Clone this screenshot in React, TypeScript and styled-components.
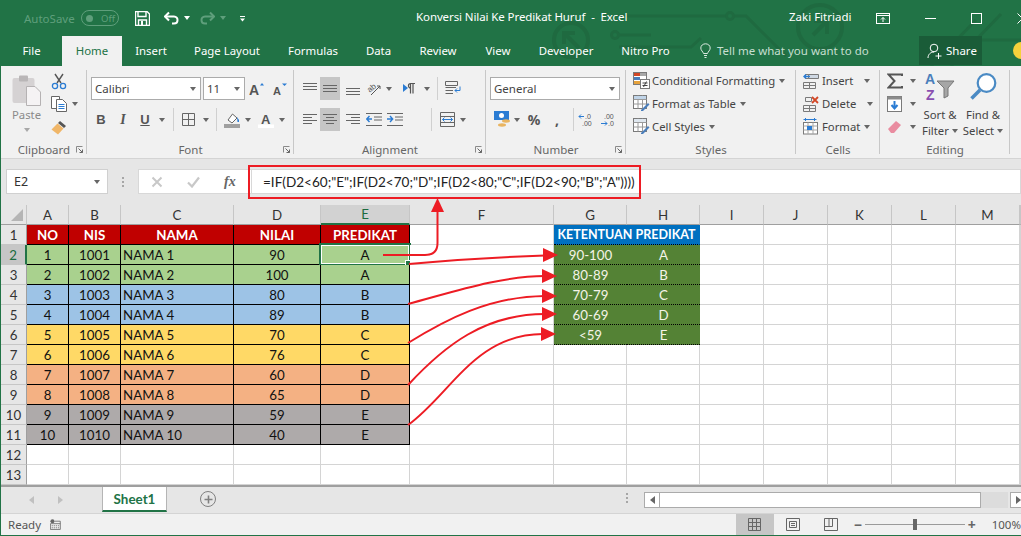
import React from "react";
import styled, { createGlobalStyle } from "styled-components";

const GlobalStyle = createGlobalStyle`
  html, body { margin: 0; padding: 0; background: #f1f1f1; }
  * { box-sizing: border-box; }
`;

const UI_FONT = `"Noto Sans", "Open Sans", sans-serif`;
const SHEET_FONT = `Lato, "Liberation Sans", sans-serif`;

const Window = styled.div`
  position: relative;
  width: 1021px;
  height: 536px;
  overflow: hidden;
  display: flex;
  flex-direction: column;
  border-left: 1px solid #217346;
  border-bottom: 1px solid #217346;
  font-family: ${UI_FONT};
  font-size: 11.3px;
  color: #444;
  background: #f1f1f1;
`;

const Header = styled.header`
  position: relative;
  height: 66px;
  flex: none;
  background: #217346;
  color: #fff;
`;

const Circuit = styled.svg`
  position: absolute;
  left: 0;
  top: 0;
`;

const TitleRow = styled.div`
  position: relative;
  height: 36px;
  display: flex;
  align-items: center;
`;

const AutoSave = styled.span`
  margin-left: 23px;
  width: 57px;
  color: #5f9f7c;
  font-size: 11.5px;
`;

const Toggle = styled.span`
  width: 38px;
  height: 16px;
  border: 1px solid #5f9f7c;
  border-radius: 8px;
  display: flex;
  align-items: center;
  gap: 8px;
  padding-left: 4px;
  color: #5f9f7c;
  font-size: 9.5px;
  &::before {
    content: "";
    width: 7px;
    height: 7px;
    border-radius: 50%;
    background: #5f9f7c;
  }
`;

const QatSlot = styled.span<{ $w: number; $ml?: number }>`
  width: ${(p) => p.$w}px;
  margin-left: ${(p) => p.$ml || 0}px;
  display: flex;
  justify-content: center;
  align-items: center;
  flex: none;
`;

const DocTitle = styled.span`
  position: absolute;
  left: 415px;
  top: 9px;
  font-size: 11.5px;
  white-space: pre;
  letter-spacing: -0.1px;
`;

const UserName = styled.span`
  position: absolute;
  left: 788px;
  top: 9px;
  font-size: 11.5px;
`;

const WindowControls = styled.div`
  margin-left: auto;
  display: flex;
  align-items: center;
  width: 145px;
  gap: 35px;
  & > svg { flex: none; }
`;

const TabRow = styled.nav`
  position: relative;
  height: 30px;
  display: flex;
  align-items: stretch;
`;

const Tab = styled.span<{ $active?: boolean; $w: number }>`
  width: ${(p) => p.$w}px;
  flex: none;
  display: flex;
  align-items: center;
  justify-content: center;
  padding-bottom: 2px;
  font-size: 11.4px;
  white-space: nowrap;
  background: ${(p) => (p.$active ? "#f1f1f1" : "transparent")};
  color: ${(p) => (p.$active ? "#217346" : "#fff")};
`;

const TellMe = styled.span`
  margin-left: 16px;
  width: 219px;
  flex: none;
  display: flex;
  align-items: center;
  gap: 6px;
  padding-bottom: 2px;
  color: #c6dfd0;
  font-size: 11.5px;
  white-space: nowrap;
`;

const ShareButton = styled.span`
  width: 63px;
  height: 29px;
  flex: none;
  display: flex;
  align-items: center;
  gap: 4px;
  padding-left: 8px;
  background: #1a5c38;
  color: #fff;
  font-size: 11.5px;
`;

const Smiley = styled.span`
  width: 17px;
  height: 17px;
  margin: 6px 0 0 31px;
  flex: none;
  border-radius: 50%;
  background: #f6d13c;
`;

const Ribbon = styled.section`
  height: 93px;
  flex: none;
  display: flex;
  background: #f1f1f1;
  border-bottom: 1px solid #d4d4d4;
`;

const GroupBox = styled.div<{ $w: number }>`
  width: ${(p) => p.$w}px;
  flex: none;
  display: flex;
  flex-direction: column;
  position: relative;
  &::after {
    content: "";
    position: absolute;
    right: 0;
    top: 4px;
    bottom: 4px;
    width: 1px;
    background: #c8c8c8;
  }
`;

const GroupBody = styled.div<{ $dir?: string; $pl?: number; $pt?: number }>`
  flex: 1;
  min-height: 0;
  display: flex;
  flex-direction: ${(p) => p.$dir || "column"};
  padding-left: ${(p) => p.$pl || 0}px;
  padding-top: ${(p) => p.$pt ?? 11}px;
`;

const GroupFooter = styled.div`
  height: 19px;
  flex: none;
  display: grid;
  grid-template-columns: 1fr auto 1fr;
  align-items: center;
  color: #666;
  font-size: 11.5px;
  padding-top: 1px;
`;

const Launcher = styled.span`
  justify-self: end;
  margin-right: 4px;
  display: flex;
`;

const ToolRow = styled.div<{ $mb?: number }>`
  height: 23px;
  flex: none;
  display: flex;
  align-items: center;
  margin-bottom: ${(p) => p.$mb ?? 8}px;
`;

const Tool = styled.span<{ $w: number; $ml?: number; $on?: boolean }>`
  width: ${(p) => p.$w}px;
  margin-left: ${(p) => p.$ml || 0}px;
  height: 23px;
  flex: none;
  display: flex;
  align-items: center;
  justify-content: center;
  background: ${(p) => (p.$on ? "#c6c6c6" : "transparent")};
`;

const LetterTool = styled(Tool)`
  font-family: "Liberation Sans", sans-serif;
  font-weight: 700;
  font-size: 13px;
  color: #555;
`;

const ItalicTool = styled(LetterTool)`
  font-family: "Liberation Serif", serif;
  font-style: italic;
  font-size: 14px;
`;

const UnderlineTool = styled(LetterTool)`
  text-decoration: underline;
`;

const NumberTool = styled(Tool)`
  font-size: 14px;
  font-weight: 700;
  color: #555;
`;

const ToolSep = styled.span<{ $ml: number }>`
  width: 1px;
  height: 23px;
  flex: none;
  margin-left: ${(p) => p.$ml}px;
  background: #d0d0d0;
`;

const Combo = styled.span<{ $w: number; $ml?: number }>`
  width: ${(p) => p.$w}px;
  margin-left: ${(p) => p.$ml || 0}px;
  height: 23px;
  flex: none;
  background: #fff;
  border: 1px solid #ababab;
  display: flex;
  align-items: center;
  justify-content: space-between;
  padding: 0 4px 0 3px;
  font-size: 11.5px;
  color: #444;
`;

const Caret = styled.span<{ $dim?: boolean; $color?: string }>`
  width: 0;
  height: 0;
  flex: none;
  border-left: 3.5px solid transparent;
  border-right: 3.5px solid transparent;
  border-top: 4px solid ${(p) => p.$color || (p.$dim ? "#a8a8a8" : "#666")};
`;

const PasteColumn = styled.div`
  width: 43px;
  flex: none;
  display: flex;
  flex-direction: column;
  align-items: center;
  color: #8a8a8a;
`;

const PasteLabel = styled.span`
  margin: 1px 0 5px;
  line-height: 16px;
`;

const ClipColumn = styled.div`
  display: flex;
  flex-direction: column;
  gap: 5px;
  margin: -3px 0 0 3px;
`;

const ClipRow = styled.div`
  height: 18px;
  display: flex;
  align-items: center;
  gap: 5px;
`;

const StackRow = styled.div`
  height: 23px;
  flex: none;
  display: flex;
  align-items: center;
  gap: 2px;
  white-space: nowrap;
  color: #444;
`;

const StackCaret = styled.span<{ $ml: number }>`
  margin-left: ${(p) => p.$ml}px;
  display: flex;
`;

const EditColumn = styled.div`
  width: 40px;
  flex: none;
  padding-left: 7px;
`;

const BigTool = styled.div<{ $w: number }>`
  width: ${(p) => p.$w}px;
  flex: none;
  display: flex;
  flex-direction: column;
  align-items: center;
  color: #444;
  line-height: 16px;
  white-space: nowrap;
`;

const BigIcon = styled.span`
  height: 35px;
  margin-bottom: 3px;
  display: flex;
  align-items: center;
`;

const BigLine = styled.span`
  display: flex;
  align-items: center;
  gap: 3px;
`;

const FormulaArea = styled.section`
  height: 46px;
  flex: none;
  background: #e6e6e6;
  display: flex;
  padding: 10px 0 0 5px;
  position: relative;
`;

const NameBox = styled.div`
  width: 102px;
  height: 25px;
  flex: none;
  background: #fff;
  border: 1px solid #d0d0d0;
  display: flex;
  align-items: center;
  justify-content: space-between;
  padding: 0 7px;
  font-size: 12.5px;
  color: #333;
`;

const Grip = styled.span`
  width: 30px;
  flex: none;
  display: flex;
  flex-direction: column;
  align-items: center;
  justify-content: center;
  height: 25px;
  gap: 2px;
  & > i {
    width: 2px;
    height: 2px;
    background: #a6a6a6;
  }
`;

const FxBox = styled.div`
  width: 113px;
  height: 25px;
  flex: none;
  background: #fff;
  border: 1px solid #d8d8d8;
  border-right: none;
  display: flex;
  align-items: center;
  padding-left: 12px;
  gap: 24px;
`;

const FxGlyph = styled.span`
  font-family: "Liberation Serif", serif;
  font-style: italic;
  font-weight: bold;
  font-size: 14px;
  color: #666;
`;

const FormulaInput = styled.div`
  flex: 1;
  height: 25px;
  background: #fff;
  border: 1px solid #d8d8d8;
  display: flex;
  align-items: center;
  padding-left: 11px;
  font-family: ${SHEET_FONT};
  font-size: 13.55px;
  color: #222;
  white-space: pre;
`;

const RedFrame = styled.div`
  position: absolute;
  left: 247px;
  top: 6px;
  width: 393px;
  height: 34px;
  border: 2px solid #ed1c24;
`;

const SheetGrid = styled.div`
  height: 280px;
  flex: none;
  background: #fff;
  font-family: ${SHEET_FONT};
  font-size: 13.3px;
  color: #111;
`;

const COLUMNS = "26px 42px 52px 113px 87px 89px 144px 73px 73px 64px 64px 64px 64px 64px 1fr";

const GridRow = styled.div`
  display: grid;
  grid-template-columns: ${COLUMNS};
  height: 20px;
`;

const Corner = styled.div`
  background: #e6e6e6;
  border-right: 1px solid #c6c6c6;
  border-bottom: 1px solid #9f9f9f;
  position: relative;
  &::after {
    content: "";
    position: absolute;
    right: 3px;
    bottom: 3px;
    border-left: 12px solid transparent;
    border-bottom: 12px solid #b5b5b5;
  }
`;

const ColHead = styled.div<{ $on?: boolean }>`
  background: ${(p) => (p.$on ? "#d2d2d2" : "#e6e6e6")};
  border-right: 1px solid #c6c6c6;
  border-bottom: ${(p) => (p.$on ? "2px solid #217346" : "1px solid #9f9f9f")};
  display: flex;
  align-items: center;
  justify-content: center;
  color: ${(p) => (p.$on ? "#1c6b40" : "#333")};
  font-size: 13.3px;
`;

const RowHead = styled.div<{ $on?: boolean }>`
  background: ${(p) => (p.$on ? "#c6c6c6" : "#e6e6e6")};
  border-right: ${(p) => (p.$on ? "2px solid #217346" : "1px solid #9f9f9f")};
  border-bottom: 1px solid #c6c6c6;
  display: flex;
  align-items: center;
  justify-content: center;
  color: ${(p) => (p.$on ? "#1c6b40" : "#333")};
  font-size: 13.3px;
`;

const Cell = styled.div<{
  $bg?: string;
  $line?: string;
  $left?: boolean;
  $color?: string;
  $bold?: boolean;
  $dotted?: boolean;
}>`
  position: relative;
  background: ${(p) => p.$bg || "#fff"};
  border-right: 1px ${(p) => (p.$dotted ? "none" : "solid")} ${(p) => p.$line || "#d4d4d4"};
  border-bottom: 1px ${(p) => (p.$dotted ? "dotted" : "solid")} ${(p) => p.$line || "#d4d4d4"};
  display: flex;
  align-items: center;
  justify-content: ${(p) => (p.$left ? "flex-start" : "center")};
  padding: 1px 0 0 ${(p) => (p.$left ? "2px" : "0")};
  color: ${(p) => p.$color || "#111"};
  font-weight: ${(p) => (p.$bold ? 700 : 400)};
  white-space: nowrap;
`;

const MergedTitle = styled(Cell)`
  grid-column: span 2;
  background: #0070c0;
  color: #fff;
  font-weight: 700;
  font-size: 12.5px;
  padding-top: 0;
  border-right: 1px solid #0070c0;
  border-bottom: 1px dotted #000;
`;

const Selection = styled.div`
  position: absolute;
  left: -2px;
  top: -2px;
  right: -2px;
  bottom: -2px;
  border: 2px solid #217346;
  outline: 1px solid #fff;
  outline-offset: -3px;
  &::after {
    content: "";
    position: absolute;
    right: -4px;
    bottom: -4px;
    width: 6px;
    height: 6px;
    background: #217346;
    border: 1px solid #fff;
  }
`;

const Arrows = styled.svg`
  position: absolute;
  left: -1px;
  top: 0;
  pointer-events: none;
`;

const SheetBar = styled.section`
  height: 28px;
  flex: none;
  background: #e6e6e6;
  border-top: 2px solid #9f9f9f;
  display: flex;
  align-items: flex-start;
`;

const NavArrow = styled.span<{ $w: number; $ml: number }>`
  width: ${(p) => p.$w}px;
  margin-left: ${(p) => p.$ml}px;
  height: 25px;
  flex: none;
  display: flex;
  align-items: center;
  justify-content: center;
`;

const SheetTab = styled.span`
  width: 65px;
  height: 25px;
  margin-left: 36px;
  flex: none;
  background: #fff;
  border-left: 1px solid #b5b5b5;
  border-right: 1px solid #b5b5b5;
  border-bottom: 2px solid #217346;
  display: flex;
  align-items: center;
  justify-content: center;
  font-family: ${SHEET_FONT};
  font-weight: 700;
  font-size: 13.4px;
  color: #217346;
`;

const AddSheet = styled.span`
  width: 16px;
  height: 16px;
  margin: 4px 0 0 33px;
  flex: none;
  border: 1px solid #808080;
  border-radius: 50%;
  display: flex;
  align-items: center;
  justify-content: center;
`;

const ScrollGrip = styled(Grip)`
  margin-left: 405px;
  width: 12px;
  height: 21px;
`;

const ScrollTrack = styled.div`
  margin: 5px 0 0 11px;
  width: 364px;
  height: 16px;
  flex: none;
  display: flex;
  background: #dcdcdc;
`;

const ScrollButton = styled.span`
  width: 16px;
  height: 16px;
  flex: none;
  background: #fff;
  border: 1px solid #ababab;
  display: flex;
  align-items: center;
  justify-content: center;
`;

const ScrollThumb = styled.span`
  width: 321px;
  height: 16px;
  flex: none;
  background: #fff;
  border: 1px solid #ababab;
  border-left: none;
`;

const ScrollEnd = styled(ScrollButton)`
  margin: 5px 0 0 2px;
  border-right: none;
`;

const StatusBar = styled.footer`
  flex: 1;
  background: #f1f1f1;
  border-top: 1px solid #d4d4d4;
  display: flex;
  align-items: center;
  color: #555;
  font-size: 11.5px;
`;

const StatusText = styled.span`
  margin-left: 7px;
  width: 51px;
`;

const ViewButton = styled.span<{ $on?: boolean; $ml?: number }>`
  width: 38px;
  height: 100%;
  flex: none;
  margin-left: ${(p) => p.$ml || 0}px;
  background: ${(p) => (p.$on ? "#c6c6c6" : "transparent")};
  display: flex;
  align-items: center;
  justify-content: center;
`;

const ZoomSlider = styled.div`
  flex: none;
  margin-left: 4px;
  display: flex;
  align-items: center;
  gap: 3px;
  color: #666;
`;

const ZoomTrack = styled.span`
  position: relative;
  width: 100px;
  height: 1px;
  flex: none;
  background: #9a9a9a;
  &::after {
    content: "";
    position: absolute;
    left: 48px;
    top: -5px;
    width: 4px;
    height: 11px;
    background: #666;
  }
`;

const ZoomSign = styled.span`
  width: 8px;
  flex: none;
  font-weight: 700;
  font-size: 14px;
  line-height: 14px;
  text-align: center;
`;

const ZoomLabel = styled.span`
  margin-left: 16px;
  white-space: nowrap;
`;

const Ico = ({ w, h, children }: { w: number; h: number; children: React.ReactNode }) => (
  <svg width={w} height={h} viewBox={`0 0 ${w} ${h}`} fill="none">
    {children}
  </svg>
);

const Lines = ({ rows, w = 14, color = "#666" }: { rows: [number, number, number][]; w?: number; color?: string }) => (
  <Ico w={w} h={15}>
    {rows.map(([y, a, b], i) => (
      <path key={i} d={`M${a} ${y + 0.5}H${b}`} stroke={color} />
    ))}
  </Ico>
);

const LauncherIcon = () => (
  <Launcher>
    <Ico w={7} h={7}>
      <path d="M0.5 6.5V0.5H6.5" stroke="#8a8a8a" />
      <path d="M2.5 2.5L6.5 6.5M6.5 3.5V6.5H3.5" stroke="#666" />
    </Ico>
  </Launcher>
);

const Group = ({ w, label, launcher, children, dir, pl, pt }: {
  w: number;
  label: string;
  launcher?: boolean;
  children: React.ReactNode;
  dir?: string;
  pl?: number;
  pt?: number;
}) => (
  <GroupBox $w={w}>
    <GroupBody $dir={dir} $pl={pl} $pt={pt}>
      {children}
    </GroupBody>
    <GroupFooter>
      <span />
      <span>{label}</span>
      {launcher ? <LauncherIcon /> : <span />}
    </GroupFooter>
  </GroupBox>
);

const TableGlyph = ({ fill }: { fill: string }) => (
  <Ico w={17} h={17}>
    <rect x="0.5" y="0.5" width="13" height="13" fill="#fff" stroke="#7a7a7a" />
    <path d="M0.5 4.5H13.5M0.5 9H13.5M5 0.5V13.5M9.5 0.5V13.5" stroke="#9a9a9a" />
    <rect x="1" y="1" width="12" height="3" fill={fill} />
    <path d="M8 15L15 8L16.5 9.5L10 16H8Z" fill="#4a7ebb" />
  </Ico>
);

const CondGlyph = () => (
  <Ico w={17} h={17}>
    <rect x="0.5" y="0.5" width="13" height="12" fill="#fff" stroke="#7a7a7a" />
    <rect x="1" y="1" width="6" height="3" fill="#d24726" />
    <rect x="7" y="1" width="6" height="3" fill="#a6a6a6" />
    <rect x="1" y="5" width="6" height="3" fill="#4a7ebb" />
    <rect x="1" y="9" width="6" height="3" fill="#e6a23c" />
    <rect x="7.5" y="7.5" width="9" height="9" fill="#fff" stroke="#7a7a7a" />
    <path d="M9.5 11H14.5M9.5 13.5H14.5M13.5 9.5L10.5 15" stroke="#444" />
  </Ico>
);

const CellsGlyph = ({ accent }: { accent: React.ReactNode }) => (
  <Ico w={17} h={17}>
    <path d="M2.5 2.5H8.5V6.5H2.5ZM0.5 10.5H6.5V16.5H0.5ZM6.5 10.5H12.5V16.5H6.5ZM0.5 13.5H12.5" stroke="#7a7a7a" />
    {accent}
  </Ico>
);

const DATA = [
  { bg: "#a9d18e", no: 1, nilai: 90, p: "A" },
  { bg: "#a9d18e", no: 2, nilai: 100, p: "A" },
  { bg: "#9dc3e6", no: 3, nilai: 80, p: "B" },
  { bg: "#9dc3e6", no: 4, nilai: 89, p: "B" },
  { bg: "#ffd966", no: 5, nilai: 70, p: "C" },
  { bg: "#ffd966", no: 6, nilai: 76, p: "C" },
  { bg: "#f4b183", no: 7, nilai: 60, p: "D" },
  { bg: "#f4b183", no: 8, nilai: 65, p: "D" },
  { bg: "#aeaaaa", no: 9, nilai: 59, p: "E" },
  { bg: "#aeaaaa", no: 10, nilai: 40, p: "E" },
];

const RULES = [
  ["90-100", "A"],
  ["80-89", "B"],
  ["70-79", "C"],
  ["60-69", "D"],
  ["<59", "E"],
];

// the last column only shows one pixel of itself, so its head stays blank
const LETTERS = ["A", "B", "C", "D", "E", "F", "G", "H", "I", "J", "K", "L", "M", ""];

const Blanks = ({ n }: { n: number }) => (
  <>
    {Array.from({ length: n }, (_, i) => (
      <Cell key={i} />
    ))}
  </>
);

const TABS: [string, number][] = [
  ["Insert", 58],
  ["Page Layout", 94],
  ["Formulas", 78],
  ["Data", 53],
  ["Review", 66],
  ["View", 54],
  ["Developer", 82],
  ["Nitro Pro", 77],
];

const App = () => {
  return (
    <Window>
      <GlobalStyle />
      <Header>
        <Circuit width="1021" height="66" fill="none" stroke="#1f6a40" strokeWidth="3">
          <circle cx="570" cy="40" r="17" strokeWidth="4" />
          <path d="M578 48L563 33M563 44V33H574" strokeWidth="4" />
          <circle cx="614" cy="35" r="3.5" />
          <path d="M618 35H650M618 47H690L700 38" />
          <path d="M617 16H725M733 16H745L785 56" />
          <circle cx="729" cy="16" r="3.5" />
          <circle cx="819" cy="27" r="22" strokeWidth="4" />
          <path d="M813 21H826V34M826 21L812 35" strokeWidth="4" />
          <path d="M930 66L975 20M950 66L1000 14M965 40H1021" />
        </Circuit>
        <TitleRow>
          <AutoSave>AutoSave</AutoSave>
          <Toggle>Off</Toggle>
          <QatSlot $w={16} $ml={15}>
            <Ico w={15} h={15}>
              <path d="M0.5 0.5H12L14.5 3V14.5H0.5Z" stroke="#fff" strokeWidth="1.4" />
              <path d="M3 1V5.5H11V1M3.5 14V9H11.5V14" stroke="#fff" strokeWidth="1.4" />
              <rect x="6" y="10" width="2" height="4" fill="#fff" />
            </Ico>
          </QatSlot>
          <QatSlot $w={16} $ml={13}>
            <Ico w={15} h={14}>
              <path d="M1 5.5H10C12.5 5.5 13.5 7.5 13.5 9C13.5 11 12 12.5 10 12.5H8" stroke="#fff" strokeWidth="2" />
              <path d="M5 1.5L1 5.5L5 9.5" stroke="#fff" strokeWidth="2" />
            </Ico>
          </QatSlot>
          <QatSlot $w={7} $ml={4}>
            <Caret $color="#fff" />
          </QatSlot>
          <QatSlot $w={16} $ml={9}>
            <Ico w={15} h={14}>
              <path d="M14 5.5H5C2.5 5.5 1.5 7.5 1.5 9C1.5 11 3 12.5 5 12.5H7" stroke="#5f9f7c" strokeWidth="2" />
              <path d="M10 1.5L14 5.5L10 9.5" stroke="#5f9f7c" strokeWidth="2" />
            </Ico>
          </QatSlot>
          <QatSlot $w={7} $ml={4}>
            <Caret $color="#5f9f7c" />
          </QatSlot>
          <QatSlot $w={8} $ml={12}>
            <Ico w={7} h={7}>
              <path d="M1 1.5H6" stroke="#fff" />
              <path d="M1 3.5H6L3.5 6.5Z" fill="#fff" />
            </Ico>
          </QatSlot>
          <DocTitle>Konversi Nilai Ke Predikat Huruf  -  Excel</DocTitle>
          <UserName>Zaki Fitriadi</UserName>
          <WindowControls>
            <Ico w={14} h={11}>
              <rect x="0.5" y="0.5" width="13" height="10" stroke="#fff" />
              <path d="M0.5 2.5H13.5M7 9V4.5M5 6.5L7 4.5L9 6.5" stroke="#fff" />
            </Ico>
            <Ico w={11} h={11}>
              <path d="M0 5.5H11" stroke="#fff" />
            </Ico>
            <Ico w={11} h={11}>
              <rect x="0.5" y="0.5" width="10" height="10" stroke="#fff" />
            </Ico>
            <Ico w={11} h={11}>
              <path d="M0.5 0.5L10.5 10.5M10.5 0.5L0.5 10.5" stroke="#fff" />
            </Ico>
          </WindowControls>
        </TitleRow>
        <TabRow>
          <Tab $w={61}>File</Tab>
          <Tab $w={60} $active>
            Home
          </Tab>
          {TABS.map(([name, w]) => (
            <Tab key={name} $w={w}>
              {name}
            </Tab>
          ))}
          <TellMe>
            <Ico w={11} h={15}>
              <path d="M3.5 10.5C3 8.5 0.8 7.5 0.8 5C0.8 2.5 3 0.8 5.5 0.8C8 0.8 10.2 2.5 10.2 5C10.2 7.5 8 8.5 7.5 10.5Z" stroke="#dcebe2" />
              <path d="M4 12.5H7M4.5 14.5H6.5" stroke="#dcebe2" />
            </Ico>
            Tell me what you want to do
          </TellMe>
          <ShareButton>
            <Ico w={15} h={16}>
              <circle cx="7" cy="5" r="3.8" stroke="#fff" />
              <path d="M1 15C1 11.5 3.5 9 7 9M8.5 13H14.5M11.5 10V16" stroke="#fff" />
            </Ico>
            Share
          </ShareButton>
          <Smiley />
        </TabRow>
      </Header>

      <Ribbon>
        <Group w={86} label="Clipboard" launcher dir="row" pl={4} pt={9}>
          <PasteColumn>
            <Ico w={30} h={31}>
              <rect x="0.5" y="3" width="22" height="25" rx="2" fill="#d5d2d3" />
              <rect x="7" y="0.5" width="9" height="6" rx="1" fill="#b9b6b7" />
              <path d="M14.5 11.5H23L28.5 17V30.5H14.5Z" fill="#f5f3f4" stroke="#b5b2b3" />
            </Ico>
            <PasteLabel>Paste</PasteLabel>
            <Caret $dim />
          </PasteColumn>
          <ClipColumn>
            <ClipRow>
              <Ico w={16} h={17}>
                <path d="M4 1L10 10M12 1L6 10" stroke="#555" strokeWidth="1.4" />
                <circle cx="4" cy="13" r="2.6" stroke="#2b7cd3" strokeWidth="1.3" />
                <circle cx="12" cy="13" r="2.6" stroke="#2b7cd3" strokeWidth="1.3" />
              </Ico>
            </ClipRow>
            <ClipRow>
              <Ico w={16} h={16}>
                <path d="M0.5 0.5H8.5V12.5H0.5Z" fill="#fff" stroke="#666" />
                <path d="M5.5 3.5H11.5L15.5 7.5V15.5H5.5Z" fill="#fff" stroke="#666" />
                <path d="M7.5 8.5H13.5M7.5 10.5H13.5M7.5 12.5H13.5" stroke="#2b7cd3" />
              </Ico>
              <Caret />
            </ClipRow>
            <ClipRow>
              <Ico w={17} h={15}>
                <path d="M9 1L15 6L13 8L7 3Z" fill="#555" />
                <path d="M6.5 3.5L12.5 8.5L7 14.5L0.5 9.5Z" fill="#f0b668" />
              </Ico>
            </ClipRow>
          </ClipColumn>
        </Group>

        <Group w={207} label="Font" launcher>
          <ToolRow>
            <Combo $w={110} $ml={4}>
              Calibri
              <Caret />
            </Combo>
            <Combo $w={42} $ml={2}>
              11
              <Caret />
            </Combo>
            <Tool $w={18} $ml={3}>
              <Ico w={16} h={20}>
                <text x="0" y="16" fontFamily="Liberation Sans" fontSize="14" fontWeight="700" fill="#555">A</text>
                <path d="M11 6.5L13 4L15 6.5Z" fill="#2b7cd3" />
              </Ico>
            </Tool>
            <Tool $w={18} $ml={5}>
              <Ico w={15} h={20}>
                <text x="0" y="16" fontFamily="Liberation Sans" fontSize="11" fontWeight="700" fill="#555">A</text>
                <path d="M9 4.5L11.5 7L14 4.5Z" fill="#2b7cd3" />
              </Ico>
            </Tool>
          </ToolRow>
          <ToolRow>
            <LetterTool $w={22} $ml={3}>B</LetterTool>
            <ItalicTool $w={22}>I</ItalicTool>
            <UnderlineTool $w={22}>U</UnderlineTool>
            <Tool $w={12}>
              <Caret />
            </Tool>
            <ToolSep $ml={5} />
            <Tool $w={28}>
              <Ico w={13} h={13}>
                <path d="M0.5 0.5H12.5V12.5H0.5ZM6.5 0.5V12.5M0.5 6.5H12.5" stroke="#666" />
              </Ico>
            </Tool>
            <Tool $w={7}>
              <Caret />
            </Tool>
            <ToolSep $ml={7} />
            <Tool $w={26} $ml={2}>
              <Ico w={17} h={16}>
                <path d="M4 8L8.5 2L13 6L8 11Z" fill="#fff" stroke="#666" />
                <path d="M13 5L15 8V10H13.5Z" fill="#2b7cd3" />
                <rect x="0" y="12" width="16" height="4" fill="#a0a0a0" />
              </Ico>
            </Tool>
            <Tool $w={6}>
              <Caret />
            </Tool>
            <Tool $w={26} $ml={2}>
              <Ico w={16} h={20}>
                <text x="3" y="13.5" fontFamily="Liberation Sans" fontSize="13" fontWeight="700" fill="#555">A</text>
                <rect x="0" y="14.5" width="16" height="3.5" fill="#fff" />
              </Ico>
            </Tool>
            <Tool $w={6}>
              <Caret />
            </Tool>
          </ToolRow>
        </Group>

        <Group w={192} label="Alignment" launcher>
          <ToolRow>
            <Tool $w={20} $ml={6}>
              <Lines rows={[[2, 0, 14], [5, 0, 14], [8, 0, 14]]} />
            </Tool>
            <Tool $w={20} $on>
              <Lines rows={[[4, 0, 14], [7, 0, 14], [10, 0, 14]]} />
            </Tool>
            <Tool $w={20} $ml={3}>
              <Lines rows={[[7, 0, 14], [10, 0, 14], [13, 0, 14]]} />
            </Tool>
            <Tool $w={20} $ml={1}>
              <Ico w={20} h={21}>
                <text x="3" y="13" fontFamily="Liberation Sans" fontSize="8" fill="#555" transform="rotate(-40 7 10)">ab</text>
                <path d="M7 17L16 8M13 8H16V11" stroke="#555" />
              </Ico>
            </Tool>
            <Tool $w={10}>
              <Caret />
            </Tool>
            <Tool $w={26} $ml={2}>
              <Ico w={13} h={13}>
                <path d="M0 2L5 6L0 10Z" fill="#2b7cd3" />
                <path d="M7.5 11.5V1.5H12M10 11.5V1.5M7.5 1.5A2 2.2 0 0 0 7.5 6" stroke="#555" strokeWidth="1.2" />
              </Ico>
            </Tool>
            <Tool $w={9}>
              <Caret />
            </Tool>
            <ToolSep $ml={6} />
            <Tool $w={30}>
              <Ico w={16} h={15}>
                <path d="M0.5 0.5H12.5V4.5H0.5ZM0.5 6.5H11M0.5 9.5H8M0.5 12.5H8" stroke="#666" />
                <path d="M15 5.5V9.5H10M12 7.5L10 9.5L12 11.5" stroke="#2b7cd3" />
              </Ico>
            </Tool>
          </ToolRow>
          <ToolRow>
            <Tool $w={20} $ml={6}>
              <Lines rows={[[2, 0, 14], [5, 0, 9], [8, 0, 14], [11, 0, 9]]} />
            </Tool>
            <Tool $w={20} $on>
              <Lines rows={[[2, 0, 14], [5, 3, 11], [8, 0, 14], [11, 3, 11]]} />
            </Tool>
            <Tool $w={20} $ml={3}>
              <Lines rows={[[2, 0, 14], [5, 5, 14], [8, 0, 14], [11, 5, 14]]} />
            </Tool>
            <Tool $w={20} $ml={1}>
              <Ico w={16} h={13}>
                <path d="M0 0.5H16M8 4H16M8 7H16M0 12.5H16" stroke="#666" />
                <path d="M6 6H1M3.5 3L0.8 6L3.5 9" stroke="#2b7cd3" strokeWidth="1.4" />
              </Ico>
            </Tool>
            <Tool $w={22}>
              <Ico w={16} h={13}>
                <path d="M0 0.5H16M8 4H16M8 7H16M0 12.5H16" stroke="#666" />
                <path d="M0 6H5M3 3L5.7 6L3 9" stroke="#2b7cd3" strokeWidth="1.4" />
              </Ico>
            </Tool>
            <ToolSep $ml={25} />
            <Tool $w={30}>
              <Ico w={15} h={15}>
                <path d="M0.5 0.5H14.5V14.5H0.5ZM0.5 4.5H14.5M0.5 10.5H14.5" stroke="#666" />
                <path d="M2.5 7.5H12.5M4.5 5.5L2.5 7.5L4.5 9.5M10.5 5.5L12.5 7.5L10.5 9.5" stroke="#2b7cd3" />
              </Ico>
            </Tool>
            <Tool $w={2}>
              <Caret />
            </Tool>
          </ToolRow>
        </Group>

        <Group w={140} label="Number" launcher>
          <ToolRow>
            <Combo $w={130} $ml={4}>
              General
              <Caret />
            </Combo>
          </ToolRow>
          <ToolRow>
            <Tool $w={22} $ml={5}>
              <Ico w={17} h={17}>
                <rect x="0" y="0" width="15" height="9" fill="#2b7cd3" />
                <circle cx="7.5" cy="4.5" r="2.5" fill="#fff" />
                <ellipse cx="12" cy="10" rx="4" ry="1.7" fill="#e9b460" />
                <ellipse cx="8" cy="14" rx="4" ry="1.7" fill="#e9b460" />
              </Ico>
            </Tool>
            <Tool $w={8}>
              <Caret />
            </Tool>
            <NumberTool $w={24} $ml={1}>%</NumberTool>
            <NumberTool $w={22}>,</NumberTool>
            <ToolSep $ml={5} />
            <Tool $w={22} $ml={1}>
              <Ico w={16} h={16}>
                <text x="7" y="7" fontFamily="Liberation Sans" fontSize="7" fill="#555">.0</text>
                <text x="4" y="14" fontFamily="Liberation Sans" fontSize="7" fill="#555">.00</text>
                <path d="M6 4.5H1M3 2.5L1 4.5L3 6.5" stroke="#2b7cd3" />
              </Ico>
            </Tool>
            <Tool $w={22}>
              <Ico w={16} h={16}>
                <text x="4" y="7" fontFamily="Liberation Sans" fontSize="7" fill="#555">.00</text>
                <text x="8" y="14" fontFamily="Liberation Sans" fontSize="7" fill="#555">.0</text>
                <path d="M1 11.5H7M5 9.5L7 11.5L5 13.5" stroke="#2b7cd3" />
              </Ico>
            </Tool>
          </ToolRow>
        </Group>

        <Group w={170} label="Styles" pl={7} pt={3}>
          <StackRow>
            <CondGlyph />
            Conditional Formatting
            <StackCaret $ml={2}>
              <Caret />
            </StackCaret>
          </StackRow>
          <StackRow>
            <TableGlyph fill="#c0d4e8" />
            Format as Table
            <StackCaret $ml={2}>
              <Caret />
            </StackCaret>
          </StackRow>
          <StackRow>
            <TableGlyph fill="#dfe7ef" />
            Cell Styles
            <StackCaret $ml={2}>
              <Caret />
            </StackCaret>
          </StackRow>
        </Group>

        <Group w={84} label="Cells" pl={7} pt={3}>
          <StackRow>
            <CellsGlyph accent={<><path d="M5.5 2.5H15.5V6.5H5.5Z" fill="#cfd8e3" stroke="#7a7a7a" /><path d="M7 4.5H1M3 2.5L1 4.5L3 6.5" stroke="#2b7cd3" strokeWidth="1.4" /></>} />
            Insert
            <StackCaret $ml={9}>
              <Caret />
            </StackCaret>
          </StackRow>
          <StackRow>
            <CellsGlyph accent={<path d="M9 2L15 8M15 2L9 8" stroke="#d24726" strokeWidth="1.8" />} />
            Delete
            <StackCaret $ml={9}>
              <Caret />
            </StackCaret>
          </StackRow>
          <StackRow>
            <Ico w={17} h={17}>
              <path d="M0.5 1.5H13.5M2.5 0V3M11.5 0V3" stroke="#2b7cd3" />
              <rect x="0.5" y="4.5" width="14" height="11.5" fill="#fff" stroke="#7a7a7a" />
              <path d="M0.5 8H14.5M0.5 12H14.5M5 4.5V16M10 4.5V16" stroke="#a6a6a6" />
              <rect x="4" y="8" width="5" height="4" fill="#2b7cd3" />
            </Ico>
            Format
            <StackCaret $ml={2}>
              <Caret />
            </StackCaret>
          </StackRow>
        </Group>

        <Group w={130} label="Editing" dir="row" pt={3}>
          <EditColumn>
            <StackRow>
              <Ico w={16} h={16}>
                <path d="M15 3V1.5H1.5L7.5 8L1.5 14.5H15V13" stroke="#555" strokeWidth="2" />
              </Ico>
              <StackCaret $ml={5}>
                <Caret />
              </StackCaret>
            </StackRow>
            <StackRow>
              <Ico w={15} h={16}>
                <rect x="0.5" y="0.5" width="14" height="15" fill="#fff" stroke="#7a7a7a" />
                <rect x="0.5" y="0.5" width="14" height="3" fill="#8a8a8a" />
                <path d="M7.5 5V12M4.5 9L7.5 12.5L10.5 9" stroke="#2b7cd3" strokeWidth="2" />
              </Ico>
              <StackCaret $ml={6}>
                <Caret />
              </StackCaret>
            </StackRow>
            <StackRow>
              <Ico w={15} h={14}>
                <path d="M9 1L14 5L7 13H4L1 9Z" fill="#e98ca0" />
              </Ico>
              <StackCaret $ml={6}>
                <Caret />
              </StackCaret>
            </StackRow>
          </EditColumn>
          <BigTool $w={40}>
            <BigIcon>
              <Ico w={31} h={35}>
                <text x="0" y="15" fontFamily="Liberation Sans" fontSize="14" fontWeight="700" fill="#4a7ebb">A</text>
                <text x="1" y="31" fontFamily="Liberation Sans" fontSize="14" fontWeight="700" fill="#8a4fb0">Z</text>
                <path d="M12 12H29L23 19V27L19 29V19Z" fill="#a6a6a6" stroke="#777" />
              </Ico>
            </BigIcon>
            <span>Sort &amp;</span>
            <BigLine>
              Filter
              <Caret />
            </BigLine>
          </BigTool>
          <BigTool $w={46}>
            <BigIcon>
              <Ico w={28} h={29}>
                <circle cx="17.5" cy="11" r="8.8" fill="#fff" stroke="#4a8ac4" strokeWidth="2.2" />
                <path d="M11 18L2.5 26.5" stroke="#4a8ac4" strokeWidth="3.5" />
              </Ico>
            </BigIcon>
            <span>Find &amp;</span>
            <BigLine>
              Select
              <Caret />
            </BigLine>
          </BigTool>
        </Group>
      </Ribbon>

      <FormulaArea>
        <NameBox>
          E2
          <Caret />
        </NameBox>
        <Grip>
          <i />
          <i />
          <i />
        </Grip>
        <FxBox>
          <Ico w={12} h={12}>
            <path d="M1.5 1.5L10.5 10.5M10.5 1.5L1.5 10.5" stroke="#c8c8c8" strokeWidth="2" />
          </Ico>
          <Ico w={13} h={12}>
            <path d="M1 6.5L5 10.5L12 1.5" stroke="#c8c8c8" strokeWidth="2.2" />
          </Ico>
          <FxGlyph>fx</FxGlyph>
        </FxBox>
        <FormulaInput>{`=IF(D2<60;"E";IF(D2<70;"D";IF(D2<80;"C";IF(D2<90;"B";"A"))))`}</FormulaInput>
        <RedFrame />
      </FormulaArea>

      <SheetGrid>
        <GridRow>
          <Corner />
          {LETTERS.map((c, i) => (
            <ColHead key={i} $on={c === "E"}>
              {c}
            </ColHead>
          ))}
        </GridRow>
        <GridRow>
          <RowHead>1</RowHead>
          {["NO", "NIS", "NAMA", "NILAI", "PREDIKAT"].map((h) => (
            <Cell key={h} $bg="#c00000" $color="#fff" $line="#000" $bold>
              {h}
            </Cell>
          ))}
          <Cell />
          <MergedTitle>KETENTUAN PREDIKAT</MergedTitle>
          <Blanks n={6} />
        </GridRow>
        {DATA.map((d, i) => (
          <GridRow key={d.no}>
            <RowHead $on={i === 0}>{i + 2}</RowHead>
            <Cell $bg={d.bg} $line="#000">{d.no}</Cell>
            <Cell $bg={d.bg} $line="#000">{1000 + d.no}</Cell>
            <Cell $bg={d.bg} $line="#000" $left>NAMA {d.no}</Cell>
            <Cell $bg={d.bg} $line="#000">{d.nilai}</Cell>
            <Cell $bg={d.bg} $line="#000">
              {d.p}
              {i === 0 && <Selection />}
            </Cell>
            <Cell />
            {RULES[i] ? (
              <>
                <Cell $bg="#548235" $color="#f4f4e8" $line="#000" $dotted>{RULES[i][0]}</Cell>
                <Cell $bg="#548235" $color="#f4f4e8" $line="#000" $dotted>{RULES[i][1]}</Cell>
              </>
            ) : (
              <Blanks n={2} />
            )}
            <Blanks n={6} />
          </GridRow>
        ))}
        {[12, 13].map((n) => (
          <GridRow key={n}>
            <RowHead>{n}</RowHead>
            <Blanks n={14} />
          </GridRow>
        ))}
      </SheetGrid>

      <SheetBar>
        <NavArrow $w={12} $ml={24}>
          <Ico w={5} h={8}>
            <path d="M5 0V8L0 4Z" fill="#c0c0c0" />
          </Ico>
        </NavArrow>
        <NavArrow $w={12} $ml={17}>
          <Ico w={5} h={8}>
            <path d="M0 0V8L5 4Z" fill="#c0c0c0" />
          </Ico>
        </NavArrow>
        <SheetTab>Sheet1</SheetTab>
        <AddSheet>
          <Ico w={9} h={9}>
            <path d="M4.5 0.5V8.5M0.5 4.5H8.5" stroke="#808080" strokeWidth="1.6" />
          </Ico>
        </AddSheet>
        <ScrollGrip>
          <i />
          <i />
          <i />
        </ScrollGrip>
        <ScrollTrack>
          <ScrollButton>
            <Ico w={5} h={8}>
              <path d="M5 0V8L0 4Z" fill="#666" />
            </Ico>
          </ScrollButton>
          <ScrollThumb />
        </ScrollTrack>
        <ScrollEnd>
          <Ico w={5} h={8}>
            <path d="M0 0V8L5 4Z" fill="#666" />
          </Ico>
        </ScrollEnd>
      </SheetBar>

      <StatusBar>
        <StatusText>Ready</StatusText>
        <Ico w={13} h={13}>
          <circle cx="3" cy="2.5" r="2.5" fill="#666" />
          <path d="M6 2.5H12.5V12.5H0.5V5.5H12.5" stroke="#666" />
          <path d="M2 8H11M2 10.5H11" stroke="#666" strokeDasharray="1.5 1" />
        </Ico>
        <ViewButton $on $ml={675}>
          <Ico w={13} h={13}>
            <path d="M0.5 0.5H12.5V12.5H0.5ZM4.5 0.5V12.5M8.5 0.5V12.5M0.5 4.5H12.5M0.5 8.5H12.5" stroke="#666" />
          </Ico>
        </ViewButton>
        <ViewButton>
          <Ico w={14} h={13}>
            <path d="M0.5 0.5H13.5V12.5H0.5ZM3.5 3.5H10.5V9.5H3.5ZM5 5.5H9M5 7.5H9" stroke="#666" />
          </Ico>
        </ViewButton>
        <ViewButton>
          <Ico w={14} h={13}>
            <path d="M0.5 0.5H13.5V12.5H0.5ZM0.5 8.5H8.5V0.5M5 0.5V8.5" stroke="#666" />
          </Ico>
        </ViewButton>
        <ZoomSlider>
          <ZoomSign>−</ZoomSign>
          <ZoomTrack />
          <ZoomSign>+</ZoomSign>
        </ZoomSlider>
        <ZoomLabel>100%</ZoomLabel>
      </StatusBar>

      <Arrows width="1021" height="536" fill="none" stroke="#ed1c24" strokeWidth="2">
        <path d="M383 255H425C433 255 437.5 251 437.5 243V210" />
        <path d="M437.5 198L431 212H444Z" fill="#ed1c24" strokeWidth="0" />
        <path d="M409 264C450 260 500 257 545 255.5" />
        <path d="M558 255L543 248V262Z" fill="#ed1c24" strokeWidth="0" />
        <path d="M408 304C450 293 500 276 545 276" />
        <path d="M557 276L542 269V283Z" fill="#ed1c24" strokeWidth="0" />
        <path d="M408 343C445 320 490 296 545 296" />
        <path d="M557 296L542 289V303Z" fill="#ed1c24" strokeWidth="0" />
        <path d="M408 385C445 345 485 314 545 314" />
        <path d="M557 314L542 307V321Z" fill="#ed1c24" strokeWidth="0" />
        <path d="M408 425C450 395 475 334 543 334" />
        <path d="M556 334L541 327V341Z" fill="#ed1c24" strokeWidth="0" />
      </Arrows>
    </Window>
  );
};

export default App;
